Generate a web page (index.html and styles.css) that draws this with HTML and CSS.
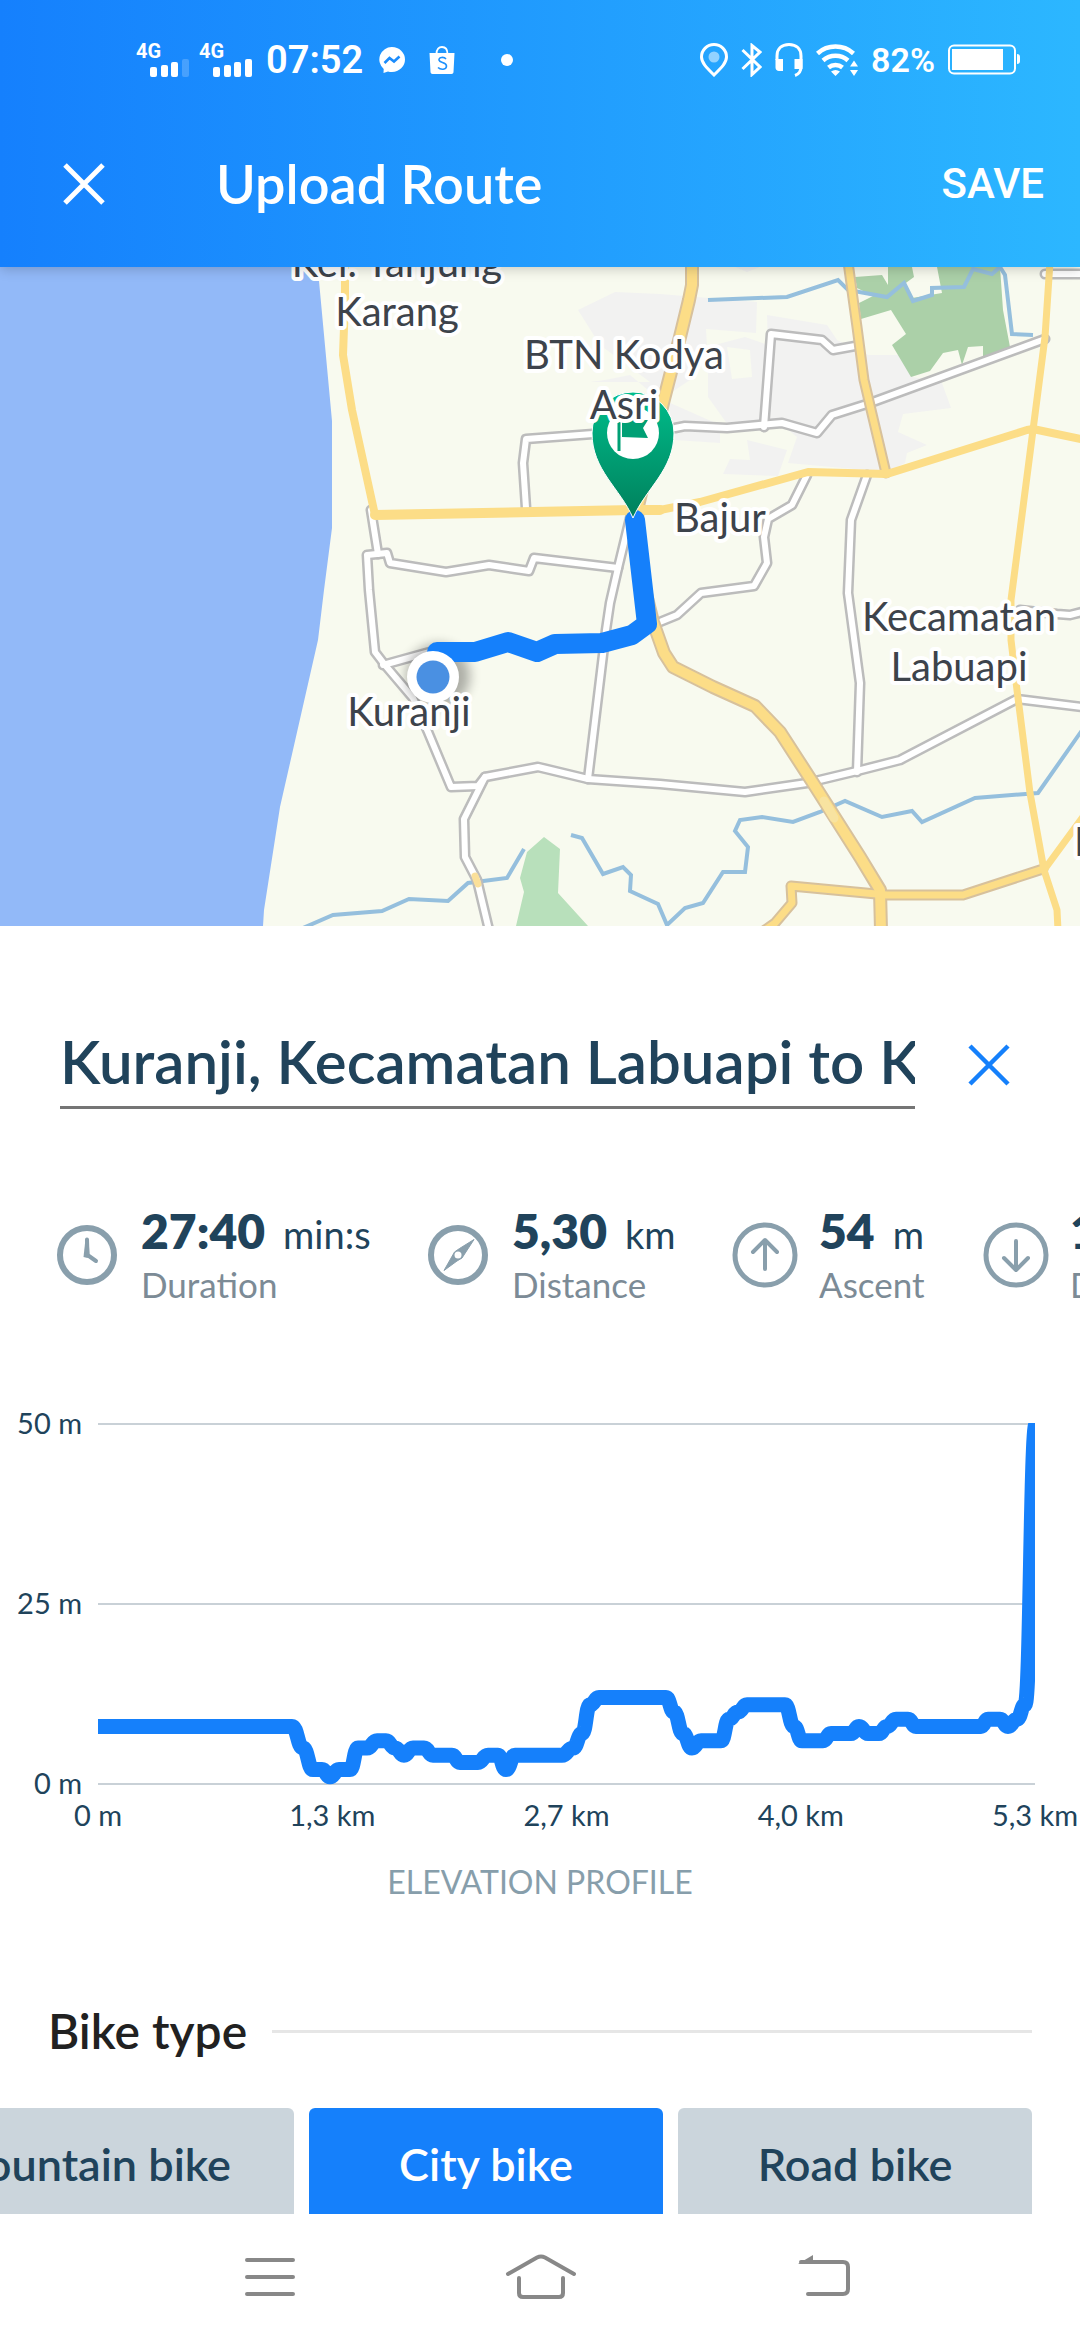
FILE: index.html
```html
<!DOCTYPE html>
<html lang="en">
<head>
<meta charset="utf-8">
<meta name="viewport" content="width=device-width, initial-scale=1">
<title>Upload Route</title>
<link rel="stylesheet" href="styles.css">
</head>
<body>
<div class="app">
  <header class="header">
    <div class="status">
      <div class="status-left">
        <span class="signal"><span class="signal-tech">4G</span>
          <svg class="signal-bars" viewBox="0 0 39 18" fill="#fff"><rect x="0" y="8" width="7" height="10" rx="2"/><rect x="11" y="6" width="7" height="12" rx="2"/><rect x="21" y="3" width="7" height="15" rx="2"/><rect x="32" y="0" width="7" height="18" rx="2" opacity=".2"/></svg>
        </span>
        <span class="signal"><span class="signal-tech">4G</span>
          <svg class="signal-bars" viewBox="0 0 39 18" fill="#fff"><rect x="0" y="8" width="7" height="10" rx="2"/><rect x="11" y="6" width="7" height="12" rx="2"/><rect x="21" y="3" width="7" height="15" rx="2"/><rect x="32" y="0" width="7" height="18" rx="2"/></svg>
        </span>
        <span class="clock">07:52</span>
        <svg class="ic-messenger" viewBox="0 0 26 26"><path fill="#fff" d="M13 0a13 12.500 0 0 1 0 25c-1.500 0-2.800-.2-4-.6L4.500 26l.2-4A12.500 12.500 0 0 1 13 0z"/><path d="M5.500 16l5-5 4.500 3.500 5.500-5" fill="none" stroke="#1b8cfc" stroke-width="2.600"/></svg>
        <svg class="ic-bag" viewBox="0 0 26 28"><path d="M7.500 8C7.500 3 10 1 13 1s5.500 2 5.500 7" fill="none" stroke="#fff" stroke-width="1.800"/><path fill="#fff" d="M.5 7h25l-1 19c0 1-1 2-2 2h-19c-1 0-2-1-2-2z"/><path d="M17 13c-2-2.500-7.500-2-7 1 .5 3 7.500 2 7.500 6 0 4-6 4-8.500 1.500" fill="none" stroke="#1d90fc" stroke-width="1.600"/></svg>
        <span class="dot"></span>
      </div>
      <div class="status-right">
        <svg class="ic-place" viewBox="0 0 28 34"><path d="M14 32C6 24 1.500 19.500 1.500 14a12.500 12.500 0 0 1 25 0C26.500 19.500 22 24 14 32z" fill="none" stroke="#fff" stroke-width="3"/><circle cx="14" cy="14" r="5.500" fill="#fff" opacity=".5"/></svg>
        <svg class="ic-bt" viewBox="0 0 21 34"><path d="M1.500 7L19 24l-8 7.500V2.500L19 9 1.500 26" fill="none" stroke="#fff" stroke-width="3"/></svg>
        <svg class="ic-headset" viewBox="0 0 28 34"><path d="M2 17v-4C2 6 6.500 1.500 14 1.500S26 6 26 13v11c0 4-2 7-6 8.500" fill="none" stroke="#fff" stroke-width="3"/><path fill="#fff" d="M.5 16H8v12H4c-2 0-3.500-1.500-3.500-3.500zM19.500 16h8v10h-8z"/></svg>
        <svg class="ic-wifi" viewBox="0 0 42 33"><g fill="none" stroke="#fff" stroke-width="4.500"><path d="M1.500 9.500a27 27 0 0 1 36 0"/><path d="M7 16.500a19 19 0 0 1 25 0"/><path d="M12.500 23.500a11 11 0 0 1 14 0"/></g><path fill="#fff" d="M15 27.500q4.500-3 9 0L19.500 32zM34 22.500l4-6 4 6zM34 26l4 6 4-6z"/></svg>
        <span class="percent">82%</span>
        <svg class="ic-battery" viewBox="0 0 72 32"><rect x="1" y="1.500" width="66" height="28" rx="5" fill="none" stroke="#fff" stroke-width="2"/><rect x="4" y="5" width="51" height="21" fill="#fff"/><path d="M69 10q3 0 3 3v4q0 3-3 3z" fill="#fff"/></svg>
      </div>
    </div>
    <div class="toolbar">
      <button class="icon-btn" type="button" aria-label="Close"><svg class="cross" viewBox="0 0 42 42"><path d="M2 2l38 38M40 2L2 40" stroke="currentColor" stroke-width="5" fill="none"/></svg></button>
      <h1 class="toolbar-title">Upload Route</h1>
      <button class="save" type="button">SAVE</button>
    </div>
  </header>

  <main class="content">
    <svg class="map" viewBox="0 267 1080 659" role="img" aria-label="Route map">
      <defs>
        <linearGradient id="pinFill" x1="0" y1="0" x2="0" y2="1"><stop offset="0" stop-color="#00bd8b"/><stop offset="1" stop-color="#00805c"/></linearGradient>
        <filter id="soft" x="-50%" y="-50%" width="200%" height="200%"><feGaussianBlur stdDeviation="6"/></filter>
        <g id="minor">
          <path d="M526 508L523 463 526 439 593 434 675 428 685 426 727 428 782 423 817 433 832 415 870 403 1045 339"/>
          <path d="M764 427L771 334 822 340 833 350 855 346"/>
          <path d="M1045 274H1090"/>
          <path d="M371 510L378 554"/>
          <path d="M618 568L534 558 529 571 489 565 446 572 390 563 387 553 367 555 369 590 375 652 385 665 413 698 428 732 451 787 478 786 485 777 538 767 588 779 660 784 745 792 807 783 857 771 900 760 1017 699 1090 708"/>
          <path d="M383 665L437 650"/>
          <path d="M632 510L618 568 610 603 606 630 588 779"/>
          <path d="M485 777L464 819 465 857 477 880 489 930"/>
          <path d="M807 475L792 505 768 519 764 537 767 563 754 586 701 593 677 615 650 626"/>
          <path d="M867 475L851 520 848 593 860 683 857 772"/>
          <path d="M1020 610L1057 614 1070 615 1090 610"/>
        </g>
        <g id="major">
          <path d="M692 262V285L689 300 680 337 663 403 637 510 640 570 653 622 664 653 673 667 713 687 755 706 780 732 813 783 860 857 880 890 881 930" stroke-width="10"/>
          <path d="M848 262L857 327 864 380 886 473"/>
          <path d="M1043 869L963 895H887L791 886 792 903 775 923 765 930"/>
        </g>
      </defs>
      <rect y="267" width="1080" height="659" fill="#f8faef"/>
      <path fill="#92b9f8" d="M0 267H318L319 281 332 421V528L324 590 318 640 280 807 264 910 263 926H0z"/>
      <g fill="#f2f2f1">
        <path d="M578 310L615 292 660 294 757 302 756 333 706 329 707 347 745 337 768 345 767 315 827 325 837 340 868 355H907L913 377 942 383 951 408 903 414 898 432 927 445 907 453 905 463 887 472 788 463 797 437 782 425H728L708 397V347L690 380 660 400 630 375 605 380 590 382H650L600 345z"/>
        <path d="M747 440L787 450 778 476 723 474 730 459 750 460zM668 402L720 425V443L675 440zM735 267L747 272 760 267zM590 422L610 410V430z"/>
      </g>
      <path fill="#f8faef" d="M727 347L750 350 752 377 732 379z"/>
      <path fill="#abd0a8" d="M855 277L882 275 888 285V267H912L914 277 903 285 912 298 942 293 937 267H1000L1003 310 1010 347 983 357V346L968 347 962 365 958 350 943 353 930 371 911 377 892 345 906 334 891 310 861 319 859 303 873 296 857 288z"/>
      <path fill="#b8e0bb" d="M544 837L560 849 558 893 588 926H516L524 892 520 878 527 852z"/>
      <g fill="none" stroke="#95bfdd" stroke-width="4">
        <path d="M708 300L787 297 838 280 848 290 887 297 904 283 913 301 932 295V288L964 287 973 269 992 274 1000 267 1005 275 1012 334 1033 335"/>
        <path d="M303 928L333 915 382 911 409 899 448 901 468 883 507 878 524 849"/>
        <path d="M571 835L582 838 603 874 623 867 631 875 630 891 658 904 667 925 685 908 703 903 723 872H745L748 847 735 831 740 820 762 817 793 822 820 812 845 801 882 817 912 811 922 822 975 798 1038 793 1085 726"/>
      </g>
      <g fill="none" stroke-linejoin="round" stroke-linecap="round">
        <use href="#minor" stroke="#bcbcbc" stroke-width="11"/>
        <use href="#minor" stroke="#fff" stroke-width="6"/>
        <path d="M475 876L478 884" stroke="#fbe09a" stroke-width="7"/>
        <g stroke="#d7c19c"><path d="M692 262V285L689 300 680 337 663 403 637 510 640 570 653 622 664 653 673 667 713 687 755 706 780 732 813 783 860 857 880 890 881 930" stroke-width="14"/><path d="M848 262L857 327 864 380 886 473M1043 869L963 895H887L791 886 792 903 775 923 765 930" stroke-width="11"/></g>
        <use href="#major" stroke="#fcdd87" stroke-width="7"/>
        <g stroke="#fcdd87">
          <path d="M345 262V300L343 355 352 410 375 515" stroke-width="8"/>
          <path d="M375 515L633 510 660 510" stroke-width="10"/>
          <path d="M660 510L700 502 808 472 887 474 1027 430 1033 429 1090 441" stroke-width="8"/>
          <path d="M1050 262L1045 337 1033 430 1011 600V640L1017 690 1030 793 1044 870 1057 910 1058 930M1044 870L1085 814" stroke-width="7"/>
        </g>
        <path d="M824 801L834 818" stroke="#f8e3a0" stroke-width="9"/>
      </g>
      <circle cx="438" cy="676" r="32" fill="#000" opacity=".3" filter="url(#soft)"/>
      <path d="M635 520L647 624 632 635 602 643 555 644 537 652 508 642 475 652H437" fill="none" stroke="#1580fb" stroke-width="20" stroke-linejoin="round" stroke-linecap="round"/>
      <path d="M633 518C620 488 592 470 592 433a41 41 0 0 1 82 0C674 470 646 488 633 518z" fill="url(#pinFill)" stroke="#fff" stroke-width="1"/>
      <circle cx="633" cy="433" r="26" fill="#fff"/>
      <path d="M617.500 419h3v32h-3zM622 420h26l-5 8 5 10-26-1z" fill="#00a075"/>
      <g class="map-labels">
        <text x="397" y="277">Kel. Tanjung</text>
        <text x="397" y="326">Karang</text>
        <text x="624" y="369">BTN Kodya</text>
        <text x="624" y="419">Asri</text>
        <text x="720" y="532">Bajur</text>
        <text x="409" y="726">Kuranji</text>
        <text x="959" y="631">Kecamatan</text>
        <text x="959" y="681">Labuapi</text>
        <text x="1086" y="856">P</text>
      </g>
      <circle cx="433" cy="677" r="26" fill="#fff"/>
      <circle cx="433" cy="677" r="16.500" fill="#4a90e2"/>
    </svg>

    <div class="name-row">
      <input class="name-input" type="text" aria-label="Route name" value="Kuranji, Kecamatan Labuapi to K">
      <button class="icon-btn clear" type="button" aria-label="Clear name"><svg class="cross" viewBox="0 0 42 42"><path d="M2 2l38 38M40 2L2 40" stroke="currentColor" stroke-width="4.500" fill="none"/></svg></button>
    </div>

    <section class="stats" aria-label="Route statistics">
      <div class="stat">
        <svg class="stat-icon" viewBox="0 0 66 66"><circle cx="33" cy="33" r="27" fill="none" stroke="#899fac" stroke-width="6"/><path d="M33 17.500L33.500 33 42 39" fill="none" stroke="#899fac" stroke-width="4" stroke-linecap="round" stroke-linejoin="round"/><path d="M31.500 17l-2 18 4 1 2-3-1-16z" fill="#899fac"/></svg>
        <div><div class="stat-value">27:40<span class="stat-unit">min:s</span></div><div class="stat-label">Duration</div></div>
      </div>
      <div class="stat">
        <svg class="stat-icon" viewBox="0 0 66 66"><circle cx="33" cy="33" r="27" fill="none" stroke="#899fac" stroke-width="6"/><path d="M49 17.500L37 36l-5 3-13 9.500L29.500 30l5-3.500z" fill="#899fac" stroke="#899fac" stroke-width="1" stroke-linejoin="round"/><circle cx="33" cy="33" r="3.500" fill="#fff"/></svg>
        <div><div class="stat-value">5,30<span class="stat-unit">km</span></div><div class="stat-label">Distance</div></div>
      </div>
      <div class="stat">
        <svg class="stat-icon" viewBox="0 0 66 66"><circle cx="33" cy="33" r="30" fill="none" stroke="#899fac" stroke-width="5"/><path d="M33 47V19M21 30l12-12 12 12" fill="none" stroke="#899fac" stroke-width="4" stroke-linecap="round" stroke-linejoin="round"/></svg>
        <div><div class="stat-value">54<span class="stat-unit">m</span></div><div class="stat-label">Ascent</div></div>
      </div>
      <div class="stat">
        <svg class="stat-icon" viewBox="0 0 66 66"><circle cx="33" cy="33" r="30" fill="none" stroke="#899fac" stroke-width="5"/><path d="M33 19v28M21 36l12 12 12-12" fill="none" stroke="#899fac" stroke-width="4" stroke-linecap="round" stroke-linejoin="round"/></svg>
        <div><div class="stat-value">14<span class="stat-unit">m</span></div><div class="stat-label">Descent</div></div>
      </div>
    </section>

    <figure class="chart">
      <div class="y-axis"><span>50 m</span><span>25 m</span><span>0 m</span></div>
      <div class="plot">
        <svg class="plot-svg" viewBox="0 0 937 362">
          <path d="M0 1H937M0 181H937M0 361H937" stroke="#c9d1d7" stroke-width="2"/>
          <path id="profile" fill="none" stroke="#1580fb" stroke-width="15" stroke-linejoin="round"/>
        </svg>
        <div class="x-axis"><span>0 m</span><span>1,3 km</span><span>2,7 km</span><span>4,0 km</span><span>5,3 km</span></div>
      </div>
      <figcaption class="chart-caption">ELEVATION PROFILE</figcaption>
    </figure>

    <section class="bike">
      <div class="bike-head"><h2 class="bike-title">Bike type</h2><span class="bike-rule"></span></div>
      <div class="bike-list">
        <button class="bike-btn" type="button">Mountain bike</button>
        <button class="bike-btn selected" type="button" aria-pressed="true">City bike</button>
        <button class="bike-btn" type="button">Road bike</button>
      </div>
    </section>
  </main>

  <nav class="sysnav" aria-label="System">
    <button class="icon-btn" type="button" aria-label="Recent apps"><svg class="nav-icon" viewBox="0 0 80 48"><path d="M17 7h46M17 24h46M17 41h46" stroke="#888" stroke-width="4" stroke-linecap="round"/></svg></button>
    <button class="icon-btn" type="button" aria-label="Home"><svg class="nav-icon" viewBox="0 0 80 48"><path d="M8 21L37 4.500q4-2 8 0L74 21M19 25v15q0 4 4 4h36q4 0 4-4V25" fill="none" stroke="#888" stroke-width="4" stroke-linecap="round"/></svg></button>
    <button class="icon-btn" type="button" aria-label="Back"><svg class="nav-icon" viewBox="0 0 80 48"><path d="M31 9H73q5 0 5 5V36q0 5-5 5H38" fill="none" stroke="#888" stroke-width="4" stroke-linecap="round"/><path d="M28 11L43 2v9z" fill="#888"/></svg></button>
  </nav>
</div>
<script src="chart.js"></script>
</body>
</html>
```
FILE: styles.css
```css
* { box-sizing: border-box; }

body {
  margin: 0;
  background: #fff;
  color: #20435b;
  font-family: Lato, "Open Sans", sans-serif;
}

button {
  margin: 0;
  padding: 0;
  border: 0;
  background: none;
  color: inherit;
  font: inherit;
}

svg { display: block; flex: none; }

.app {
  display: flex;
  flex-direction: column;
  height: 100vh;
}

/* Header */
.header {
  position: relative;
  z-index: 1;
  flex: none;
  padding: 32px 0 24px;
  background: linear-gradient(90deg, #1580fd, #2cb7ff);
  box-shadow: 0 2px 12px rgba(0, 0, 0, 0.2);
  color: #fff;
}

.status {
  display: flex;
  justify-content: space-between;
  align-items: center;
  height: 56px;
  padding: 0 60px 0 136px;
  font-family: Roboto, sans-serif;
  font-weight: 700;
}

.status-left,
.status-right { display: flex; align-items: center; }

.signal {
  display: flex;
  flex-direction: column;
  width: 53px;
  margin-right: 10px;
}

.signal-tech { font-size: 20px; line-height: 16px; }
.signal-bars { width: 39px; height: 18px; align-self: flex-end; }
.clock { margin-left: 4px; font-size: 38px; font-weight: 600; }
.ic-messenger { width: 26px; height: 26px; margin-left: 16px; }
.ic-bag { width: 26px; height: 28px; margin-left: 24px; }
.dot { width: 12px; height: 12px; margin-left: 46px; border-radius: 50%; background: #fff; }
.status-right { gap: 13px; }
.ic-place { width: 28px; height: 34px; }
.ic-bt { width: 21px; height: 34px; }
.ic-headset { width: 28px; height: 34px; }
.ic-wifi { width: 42px; height: 33px; }
.percent { font-size: 34px; font-weight: 600; }
.ic-battery { width: 72px; height: 32px; }

.toolbar {
  display: flex;
  align-items: center;
  height: 155px;
  padding: 36px 36px 0 63px;
}

.icon-btn { display: flex; align-items: center; justify-content: center; }
.cross { width: 42px; height: 42px; }
.toolbar-title { flex: 1; margin: 0 0 0 111px; font-size: 54px; font-weight: 600; line-height: 64px; }
.save { font: 500 42px Roboto, sans-serif; }

/* Scrolling content */
.content {
  flex: 1;
  min-height: 0;
  overflow: hidden auto;
  scrollbar-width: none;
}

.map { width: 100%; height: auto; }

.map-labels {
  fill: #3d434b;
  stroke: #fff;
  stroke-width: 8px;
  stroke-linejoin: round;
  paint-order: stroke;
  font-size: 40px;
  text-anchor: middle;
}

.name-row {
  display: flex;
  align-items: center;
  gap: 53px;
  padding: 94px 70px 0 60px;
}

.name-input {
  flex: 1;
  min-width: 0;
  height: 89px;
  padding: 0 0 4px;
  border: 0;
  border-bottom: 3px solid #757575;
  border-radius: 0;
  background: none;
  outline: 0;
  color: #20435b;
  font: 600 60px Lato, sans-serif;
}

.clear { color: #1580fb; }

.stats {
  display: grid;
  grid-template-columns: 371px 307px 251px 251px;
  overflow: hidden;
  padding: 94px 0 0 54px;
}

.stat { display: flex; align-items: center; gap: 21px; }
.stat-icon { width: 66px; height: 66px; }
.stat-value { font-size: 48px; font-weight: 800; line-height: 56px; white-space: nowrap; }
.stat-unit { margin-left: 18px; font-size: 38px; font-weight: 400; }
.stat-label { color: #7c8b96; font-size: 35px; line-height: 44px; }

/* Elevation chart */
.chart {
  display: grid;
  grid-template-columns: 82px 1fr;
  column-gap: 16px;
  margin: 0;
  padding: 97px 45px 0 0;
}

.y-axis {
  display: flex;
  flex-direction: column;
  justify-content: space-between;
  height: 400px;
  text-align: right;
}

.y-axis span, .x-axis span { font-size: 29px; line-height: 40px; white-space: nowrap; }
.plot { padding-top: 20px; }
.plot-svg { width: 100%; height: auto; }
.x-axis { display: flex; justify-content: space-between; padding-top: 10px; }
.x-axis span { display: flex; justify-content: center; width: 0; }

.chart-caption {
  grid-column: 1 / -1;
  padding: 25px 0 0 45px;
  color: #879eab;
  font-size: 32px;
  line-height: 44px;
  text-align: center;
}

/* Bike type */
.bike { padding-top: 99px; }
.bike-head { display: flex; align-items: center; gap: 25px; padding: 0 48px; }
.bike-title { margin: 0; color: #212121; font-size: 48px; font-weight: 600; line-height: 56px; }
.bike-rule { flex: 1; height: 3px; background: #e6e6e6; }

.bike-list {
  display: flex;
  justify-content: flex-end;
  gap: 15px;
  overflow: hidden;
  padding: 49px 48px 48px 0;
}

.bike-btn {
  flex: none;
  min-width: 354px;
  height: 112px;
  padding: 0 63px;
  border-radius: 6px;
  background: #cbd5dc;
  font-size: 45px;
  font-weight: 600;
}

.bike-btn.selected { background: #1580fb; color: #fff; }

/* System navigation */
.sysnav {
  display: grid;
  grid-template-columns: repeat(3, 1fr);
  flex: none;
  height: 126px;
  padding: 0 12.5%;
  background: #fff;
}

.nav-icon { width: 80px; height: 48px; }
```
FILE: chart.js
```js
// Elevation samples: horizontal position in the plot, height in metres.
const samples = [
  [0, 8], [194, 8], [205, 5], [215, 2], [224, 2], [232, 1], [241, 2], [252, 2],
  [260, 5], [269, 5], [279, 6], [288, 6], [297, 5], [306, 4], [315, 5], [326, 5],
  [335, 4], [354, 4], [362, 3], [380, 3], [390, 4], [400, 4], [408, 2], [417, 4],
  [464, 4], [475, 5], [484, 7], [492, 11], [501, 12], [568, 12], [576, 10], [585, 7],
  [594, 5], [603, 6], [623, 6], [631, 9], [640, 10], [649, 11], [687, 11], [696, 8],
  [704, 6], [725, 6], [733, 7], [753, 7], [761, 8], [770, 7], [781, 7], [789, 8],
  [798, 9], [810, 9], [818, 8], [883, 8], [890, 9], [902, 9], [910, 8], [919, 9],
  [927, 11], [938, 50]
];
const y = (m) => 361 - m * 7.2;
let d = `M${samples[0][0]} ${y(samples[0][1])}`;
for (let i = 1; i < samples.length; i++) {
  const [x0, m0] = samples[i - 1];
  const [x1, m1] = samples[i];
  const mid = (x0 + x1) / 2;
  d += `C${mid} ${y(m0)} ${mid} ${y(m1)} ${x1} ${y(m1)}`;
}
document.getElementById("profile").setAttribute("d", d);
```
